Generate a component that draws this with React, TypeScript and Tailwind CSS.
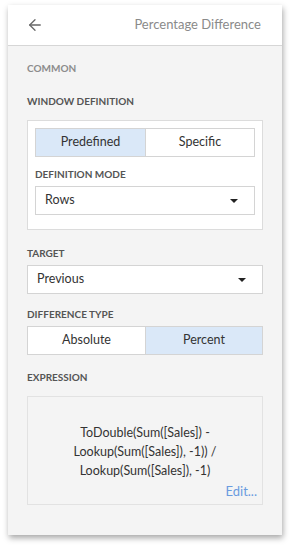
import { ArrowLeft } from 'lucide-react';

function Label({ children, className = '' }: { children: React.ReactNode; className?: string }) {
  return (
    <div className={`h-[14px] text-[10px] leading-[14px] font-bold uppercase ${className}`}>
      {children}
    </div>
  );
}

function Select({ value }: { value: string }) {
  return (
    <div className="flex h-[29px] items-center justify-between border border-[#d4d4d4] bg-white pl-[9px] pr-[16px] text-[12.5px] text-[#333]">
      <span>{value}</span>
      <span className="h-0 w-0 border-x-[4px] border-t-[4px] border-x-transparent border-t-[#222]" />
    </div>
  );
}

function Toggle({ options, active }: { options: string[]; active: number }) {
  return (
    <div className="grid h-[29px] grid-cols-2 border border-[#d4d4d4] bg-white text-[12.5px] text-[#333]">
      {options.map((opt, i) => (
        <div
          key={opt}
          className={`flex items-center justify-center ${i > 0 ? 'border-l border-[#d4d4d4]' : ''} ${i === active ? 'bg-[#dae8f8]' : ''}`}
        >
          {opt}
        </div>
      ))}
    </div>
  );
}

export default function App() {
  return (
    <div className="h-[552px] w-[296px] bg-white pl-[8px] pt-[5px]" style={{ fontFamily: 'Lato, "Open Sans", sans-serif' }}>
      <div className="flex h-[530px] w-[274px] flex-col bg-[#f4f4f4] shadow-[1px_3px_6px_rgba(0,0,0,0.35)]">
        <div className="flex h-[41px] shrink-0 items-center justify-between border-b border-[#d6d6d6] bg-white pl-[18px] pr-[21px]">
          <ArrowLeft size={18} strokeWidth={1.75} className="text-[#666]" />
          <span className="text-[13px] text-[#8a8a8a]">Percentage Difference</span>
        </div>

        <div className="flex flex-col px-[19px] pt-[15px]">
          <Label className="text-[#8c8c8c]">Common</Label>
          <Label className="mt-[19px] text-[#555]">Window Definition</Label>

          <div className="mt-[12px] border border-[#dcdcdc] bg-white px-[7px] pb-[14px] pt-[7px]">
            <Toggle options={['Predefined', 'Specific']} active={0} />
            <Label className="mt-[10px] text-[#555]">Definition Mode</Label>
            <div className="mt-[5px]">
              <Select value="Rows" />
            </div>
          </div>

          <Label className="mt-[16px] text-[#555]">Target</Label>
          <div className="mt-[5px]">
            <Select value="Previous" />
          </div>

          <Label className="mt-[13px] text-[#555]">Difference Type</Label>
          <div className="mt-[5px]">
            <Toggle options={['Absolute', 'Percent']} active={1} />
          </div>

          <Label className="mt-[15px] text-[#555]">Expression</Label>
          <div className="mt-[12px] flex h-[109px] flex-col border border-[#e2e2e2] px-[4px]">
            <div className="mt-[26px] text-center text-[12.5px] leading-[19px] text-[#333]">
              ToDouble(Sum([Sales]) -<br />
              Lookup(Sum([Sales]), -1)) /<br />
              Lookup(Sum([Sales]), -1)
            </div>
            <div className="mt-[3px] pr-[1px] text-right text-[13px] leading-[16px] text-[#6a9be0]">Edit...</div>
          </div>
        </div>
      </div>
    </div>
  );
}
